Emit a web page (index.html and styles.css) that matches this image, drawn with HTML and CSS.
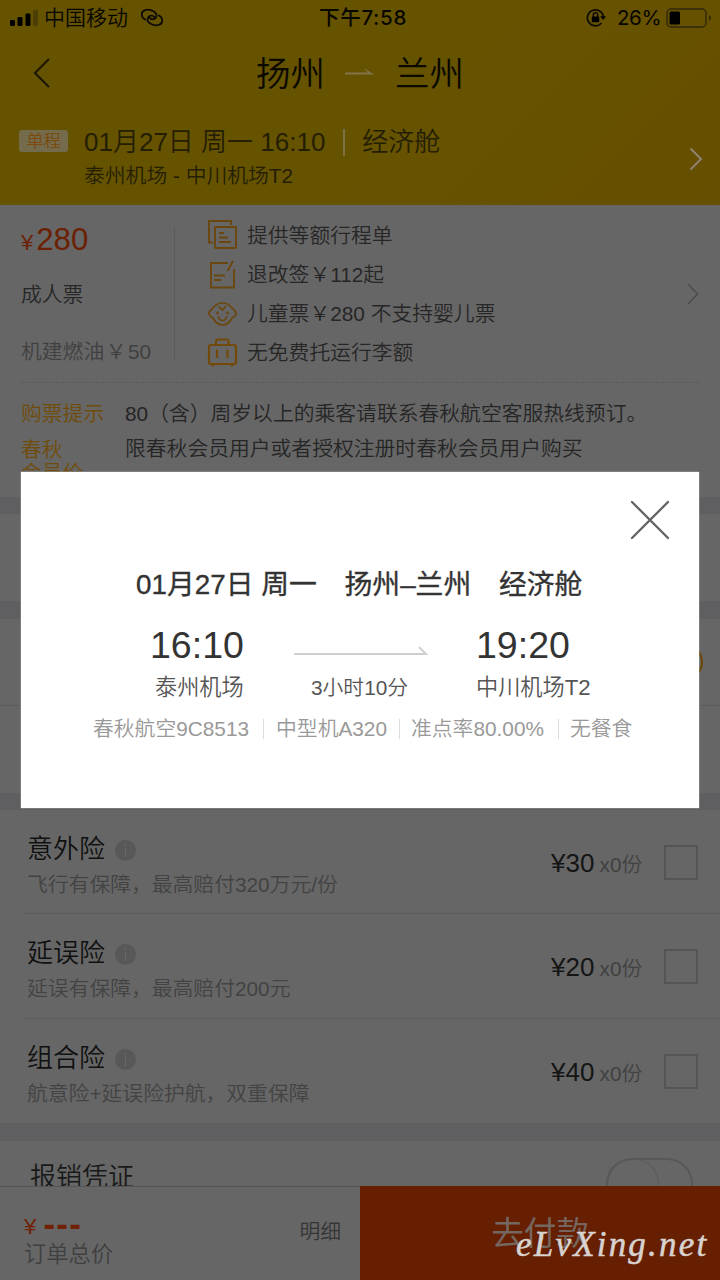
FILE: index.html
```html
<!DOCTYPE html>
<html lang="zh-CN">
<head>
<meta charset="utf-8">
<title>订单填写</title>
<link rel="stylesheet" href="styles.css">
</head>
<body>
<div class="screen">
  <header class="header">
    <div class="status">
      <svg class="signal" viewBox="0 0 28 18" width="28" height="18"><rect x="0" y="11" width="5" height="6" rx="1.3"/><rect x="7.500" y="8" width="5" height="9" rx="1.300"/><rect x="15.500" y="4.500" width="5" height="12.500" rx="1.300"/><rect x="23" y="1" width="5" height="16" rx="1.300" fill="#4c3e06"/></svg>
      <span class="carrier">中国移动</span>
      <svg class="hotspot" viewBox="0 0 24 20" width="24" height="20"><g fill="none" stroke="#100d04" stroke-width="1.800" stroke-linecap="round"><path d="M5 11.500C1 9.500 .5 4 4.500 2.300C8 .8 14 2 16 5.500C17.800 9 14.500 12 11.500 11.200C10 10.800 9 9.500 9.500 8.200"/><path d="M19 7.500C23 9.500 23.500 15 19.500 16.700C16 18.200 10 17 8 13.500C6.200 10 9.500 7 12.500 7.800C14 8.200 15 9.500 14.500 10.800"/></g></svg>
      <span class="clock">下午7:58</span>
      <svg class="lock" viewBox="0 0 20 20" width="20" height="20"><g fill="none" stroke="#0e0b03" stroke-width="1.700"><path d="M15.500 15A8 8 0 1 1 17.300 8.500"/><path d="M7.300 9V7A2.200 2.200 0 0 1 11.700 7V9" stroke-width="1.500"/></g><rect x="5.800" y="8.500" width="7.400" height="5.800" rx=".8"/><path d="M14.200 8.300H20L17.100 12Z"/></svg>
      <span class="percent">26%</span>
      <svg class="battery" viewBox="0 0 46 20" width="46" height="20"><rect x="1" y="1" width="39" height="18" rx="4" fill="none" stroke="#33290b" stroke-width="1.500"/><rect x="3.500" y="3.500" width="10.500" height="13" rx="1.500"/><path d="M43 7Q45 8 45 10T43 13Z" fill="#33290b"/></svg>
    </div>
    <div class="titlebar">
      <svg class="back" viewBox="0 0 18 32" width="18" height="32"><path d="M17 2L3 16L17 30" fill="none" stroke="#1c1806" stroke-width="2.200"/></svg>
      <span>扬州</span>
      <svg class="title-arrow" viewBox="0 0 30 10" width="30" height="10"><path d="M0 5.500H23L19 1L29 7.500H0Z" fill="#81754b"/></svg>
      <span>兰州</span>
    </div>
    <div class="flight">
      <span class="tag">单程</span>
      <div class="flight-info">
        <div class="flight-date"><span>01月27日 周一 16:10</span><i></i><span>经济舱</span></div>
        <div class="flight-port">泰州机场 - 中川机场T2</div>
      </div>
      <svg class="go" viewBox="0 0 14 24" width="14" height="24"><path d="M1.500 1.500L12 12L1.500 22.500" fill="none" stroke="#8c8370" stroke-width="2"/></svg>
    </div>
  </header>

  <section class="fare">
    <div class="fare-price">
      <div class="amount"><span>¥</span>280</div>
      <div class="adult">成人票</div>
      <div class="fuel">机建燃油<span>￥</span>50</div>
    </div>
    <ul class="rules">
      <li><svg viewBox="0 0 32 32" width="32" height="32"><g fill="none" stroke="#6b4710" stroke-width="1.900"><path d="M7 22.500H3V1H25V5"/><rect x="9" y="7" width="21" height="21" rx=".5"/><path d="M13 13H18M13 17.500H22M13 22H25"/></g></svg><span>提供等额行程单</span></li>
      <li><svg viewBox="0 0 32 32" width="32" height="32"><g fill="none" stroke="#6b4710" stroke-width="1.900"><path d="M22 4H5V28.500H28V10"/><path d="M27 2L21.500 12M8 16.500H19M8 21H15"/></g></svg><span>退改签￥112起</span></li>
      <li><svg viewBox="0 0 32 32" width="32" height="32"><g fill="none" stroke="#6b4710" stroke-width="1.700" stroke-linecap="round"><path d="M6.500 10.500Q10.500 5 16.500 5T26.500 10.500Q30 13 30 15.500T26 20Q22.500 27 16.500 27T7 20Q3 18 3 15.500T6.500 10.500Z"/><path d="M12.500 18.500Q13 22.500 16.500 22.500T20.500 18.500M13 9L16.500 12L19.500 8.500"/></g><circle cx="11.500" cy="15" r="1.400" fill="#6b4710"/><circle cx="21.500" cy="15" r="1.400" fill="#6b4710"/></svg><span>儿童票￥280 不支持婴儿票</span></li>
      <li><svg viewBox="0 0 32 32" width="32" height="32"><g fill="none" stroke="#73490a" stroke-width="2.200"><rect x="3" y="8" width="27" height="19" rx="2"/><path d="M10 8V4Q10 2.500 11.500 2.500H21Q22.500 2.500 22.500 4V8M7 27V29.500M26 27V29.500M11 12.500V21M21.500 12.500V21"/></g></svg><span>无免费托运行李额</span></li>
    </ul>
    <svg class="fare-go" viewBox="0 0 12 22" width="12" height="22"><path d="M1 1L10.500 11L1 21" fill="none" stroke="#4c4c4c" stroke-width="1.500"/></svg>
  </section>
  <section class="tips">
    <div class="tip"><b>购票提示</b><p>80（含）周岁以上的乘客请联系春秋航空客服热线预订。</p></div>
    <div class="tip"><b>春秋<br>会员价</b><p>限春秋会员用户或者授权注册时春秋会员用户购买</p></div>
  </section>
  <section class="blank"></section>
  <section class="passenger">
    <div class="passenger-add"><i class="add"></i></div>
    <div class="passenger-phone"></div>
  </section>
  <section class="insurance">
    <div class="item">
      <div class="item-text"><h3>意外险<i class="info"></i></h3><p>飞行有保障，最高赔付320万元/份</p></div>
      <div class="item-price">¥30 <span>x0份</span></div><i class="check"></i>
    </div>
    <div class="item">
      <div class="item-text"><h3>延误险<i class="info"></i></h3><p>延误有保障，最高赔付200元</p></div>
      <div class="item-price">¥20 <span>x0份</span></div><i class="check"></i>
    </div>
    <div class="item">
      <div class="item-text"><h3>组合险<i class="info"></i></h3><p>航意险+延误险护航，双重保障</p></div>
      <div class="item-price">¥40 <span>x0份</span></div><i class="check"></i>
    </div>
  </section>
  <section class="voucher"><span>报销凭证</span><i class="toggle"></i></section>

  <footer class="bottom">
    <div class="total">
      <div class="total-text"><div class="sum"><span>¥</span><b>---</b></div><div class="sum-label">订单总价</div></div>
      <span class="detail">明细</span>
    </div>
    <div class="pay">去付款</div>
  </footer>

  <div class="modal">
    <svg class="close" viewBox="0 0 40 40" width="40" height="40"><path d="M2 2L38 38M38 2L2 38" stroke="#636363" stroke-width="2.300" stroke-linecap="round"/></svg>
    <h2>01月27日 周一　扬州–兰州　经济舱</h2>
    <div class="route">
      <div class="stop from"><strong>16:10</strong><span>泰州机场</span></div>
      <div class="duration"><svg viewBox="0 0 136 12" width="136" height="12"><path d="M1 9H133L126 2" fill="none" stroke="#cfcfcf" stroke-width="2"/></svg><span>3小时10分</span></div>
      <div class="stop to"><strong>19:20</strong><span>中川机场T2</span></div>
    </div>
    <div class="facts"><span>春秋航空9C8513</span><span>中型机A320</span><span>准点率80.00%</span><span>无餐食</span></div>
  </div>
  <div class="watermark">eLvXing.net</div>
</div>
</body>
</html>
```
FILE: styles.css
```css
* { box-sizing: border-box; margin: 0; padding: 0; }
body { background: #666; }
i { font-style: normal; }
ul { list-style: none; }
svg { display: block; flex: none; }
.screen {
  position: relative; width: 720px; height: 1280px; overflow: hidden;
  display: flex; flex-direction: column; background: #666;
  font: 350 20.8px/30px "Liberation Sans", "Noto Sans CJK SC", sans-serif;
  color: #2a2a2a; white-space: nowrap;
}

.header { height: 205px; flex: none; background: linear-gradient(135deg, #665300 55%, #664f00 100%); }
.status { display: flex; align-items: center; height: 36px; padding-left: 10px; color: #080600; font-size: 21px; }
.carrier { margin-left: 6px; width: 84px; }
.hotspot { margin-left: 12px; }
.clock { margin-left: 155px; width: 90px; font: 500 20.5px/30px Inter, "Noto Sans CJK SC", sans-serif; letter-spacing: .7px; }
.lock { margin-left: 177px; }
.percent { margin-left: 11px; width: 46px; font: 400 20.5px/30px Inter, sans-serif; letter-spacing: -.4px; }
.battery { margin-left: 3px; }
.titlebar { display: flex; align-items: center; height: 75px; padding-left: 32px; color: #0b0900; font-size: 34.500px; line-height: 48px; }
.back { margin: 0 206px 2px 0; }
.title-arrow { margin: 0 20px 4px 20px; }
.flight { display: flex; padding: 1px 0 0 19px; color: #241e05; }
.tag { width: 49px; height: 22px; margin: 18px 16px 0 0; border-radius: 3px; background: #746b4d; color: #7b4a0c; font-size: 17.300px; line-height: 23px; text-align: center; }
.flight-info { flex: 1; padding-top: 13px; }
.flight-date { display: flex; align-items: center; height: 34px; font-size: 26px; line-height: 34px; }
.flight-date i { width: 2px; height: 27px; margin: 0 17px 0 18px; background: #7c7148; }
.flight-port { height: 34px; line-height: 34px; }
.go { margin: 35px 17px 0 0; }

.fare { display: flex; height: 178px; flex: none; margin: 0 21px; border-bottom: 1px dashed #5b5b5b; color: #262626; }
.fare-price { width: 154px; height: 134px; margin-top: 21px; border-right: 1px solid #5b5b5b; line-height: 30px; }
.amount { height: 27px; line-height: 27px; font-size: 31.200px; color: #6b2004; }
.amount span { font-size: 22px; margin-right: 3px; }
.adult { margin-top: 27px; }
.fuel { margin-top: 27px; color: #404040; }
.fuel span { margin: 0 1.500px; }
.rules { flex: 1; padding: 11px 0 0 31px; }
.rules li { display: flex; align-items: center; gap: 9px; height: 39px; }
.rules span { padding-top: 1px; }
.fare-go { margin: 78px 0 0; }

.tips { height: 114px; flex: none; padding: 13px 21px 0; overflow: hidden; }
.tip { display: flex; height: 35px; line-height: 35px; }
.tip b { width: 104px; font-weight: 350; color: #704c0a; }
.tip + .tip b { line-height: 23px; padding-top: 7px; }
.tip p { color: #252525; }
.blank { height: 122px; flex: none; border: solid #5f5f61; border-width: 17px 0 18px; }
.passenger { height: 191px; flex: none; border-bottom: 17px solid #5f5f61; }
.passenger-add { display: flex; justify-content: flex-end; align-items: center; height: 87px; padding-right: 17px; border-bottom: 1px solid #5d5d5d; }
.add { width: 36px; height: 36px; border: 2px solid #6b4503; border-radius: 50%; }

.insurance { height: 331px; flex: none; border-bottom: 18px solid #5f5f61; padding-left: 23px; }
.item { display: flex; align-items: center; height: 104.400px; padding: 1px 22px 0 4px; border-bottom: 1px solid #5d5d5d; }
.item:last-child { border-bottom: 0; }
.item-text { flex: 1; padding-top: 9px; }
.item h3 { display: flex; align-items: center; gap: 10px; height: 36px; font-size: 26px; font-weight: 350; line-height: 36px; color: #111; }
.item p { height: 36px; line-height: 36px; color: #434343; }
.info { position: relative; width: 21px; height: 21px; margin-top: 3px; border-radius: 50%; background: #585858; }
.info::before { content: ""; position: absolute; left: 10px; top: 4px; width: 1px; height: 13px; background: linear-gradient(#686868 2px, #585858 2px, #585858 4px, #686868 4px); }
.item-price { width: 91px; margin-right: 22px; padding-top: 3px; font-size: 26px; color: #151515; }
.item-price span { margin-left: -2px; font-size: 20.800px; color: #414141; }
.check { width: 34px; height: 35px; border: 2px solid #555; }
.voucher { display: flex; justify-content: space-between; height: 90px; flex: none; padding: 17px 27px 0 30px; font-size: 26px; line-height: 38px; color: #191919; }
.toggle { width: 87px; height: 52px; border: 2px solid #585858; border-radius: 26px; background: radial-gradient(circle at 25px 24px, transparent 24px, #5d5d5d 25px, transparent 27px); }

.bottom { position: absolute; left: 0; right: 0; bottom: 0; height: 94px; display: flex; }
.total { display: flex; justify-content: space-between; align-items: center; width: 360px; padding: 0 19px 0 24px; background: #666; border-top: 1px solid #555; }
.total-text { padding-top: 15px; }
.sum { display: flex; align-items: center; height: 28px; color: #702106; }
.sum span { font-size: 22.300px; }
.sum b { margin: -7px 0 0 7px; font-size: 35px; letter-spacing: 1.300px; line-height: 28px; }
.sum-label { height: 28px; line-height: 28px; font-size: 22.300px; color: #404040; }
.detail { margin-top: -4px; color: #353535; }
.pay { flex: 1; padding-top: 24px; background: #661f00; color: #75665f; font-size: 32.600px; line-height: 48px; font-weight: 400; text-align: center; }

.modal { position: absolute; left: 21px; top: 472px; width: 678px; height: 336px; background: #fff; box-shadow: 0 0 1px #fff; }
.close { margin: 28px 29px 0 auto; }
.modal h2 { margin: 27px 0 0 115px; height: 36px; font-size: 27.800px; font-weight: 400; line-height: 36px; color: #333; -webkit-text-stroke: .35px #333; }
.route { display: flex; height: 92px; margin-top: 19px; }
.stop, .duration { display: flex; flex-direction: column; }
.stop strong { height: 46px; font-size: 37.500px; font-weight: 400; line-height: 46px; color: #333; }
.stop span { height: 38px; font-size: 22.200px; line-height: 40px; color: #555; }
.from { width: 145px; margin-left: 129px; }
.from span { padding-left: 5px; }
.duration { width: 181px; color: #555; }
.duration svg { margin: 23px 0 12px -2px; }
.duration span { height: 36px; line-height: 38px; padding-left: 16px; }
.facts { display: flex; align-items: center; margin: 5px 0 0 72px; color: #999; line-height: 20px; }
.facts span + span { margin-left: 14px; padding-left: 12px; border-left: 1px solid #ddd; }
.facts span:nth-child(3) { margin-left: 12px; padding-left: 11px; }
.facts span:nth-child(4) { padding-left: 11px; }

.watermark { position: absolute; left: 516px; top: 1221px; color: #d8d2d0; font: italic 400 35px/48px "Liberation Serif", serif; letter-spacing: 2.200px; -webkit-text-stroke: .5px #d8d2d0; }
```
